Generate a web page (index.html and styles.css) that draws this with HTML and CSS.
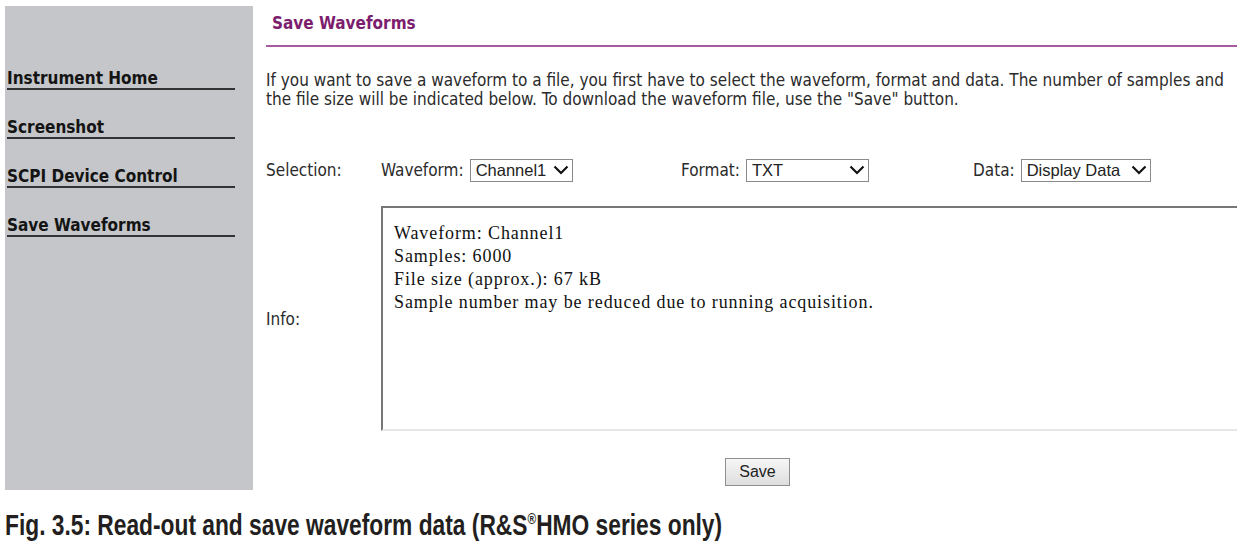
FILE: index.html
```html
<!DOCTYPE html>
<html>
<head>
<meta charset="utf-8">
<link rel="stylesheet" href="styles.css">
</head>
<body>
<div class="page">
  <aside class="sidebar">
    <nav class="nav">
      <a class="nav-item">Instrument Home</a>
      <a class="nav-item">Screenshot</a>
      <a class="nav-item">SCPI Device Control</a>
      <a class="nav-item">Save Waveforms</a>
    </nav>
  </aside>
  <main class="main">
    <h1 class="title">Save Waveforms</h1>
    <p class="intro">If you want to save a waveform to a file, you first have to select the waveform, format and data. The number of samples and the file size will be indicated below. To download the waveform file, use the "Save" button.</p>
    <div class="form">
      <div class="label">Selection:</div>
      <div class="selects">
        <div class="field f-wave">
          <span class="flabel">Waveform:</span>
          <span class="select s-wave"><span class="stext">Channel1</span><svg class="chev" viewBox="0 0 16 10" width="16" height="10"><path d="M1.5 1.5 L8 8 L14.5 1.5" fill="none" stroke="#111" stroke-width="2.2"/></svg></span>
        </div>
        <div class="field f-format">
          <span class="flabel">Format:</span>
          <span class="select s-format"><span class="stext">TXT</span><svg class="chev" viewBox="0 0 16 10" width="16" height="10"><path d="M1.5 1.5 L8 8 L14.5 1.5" fill="none" stroke="#111" stroke-width="2.2"/></svg></span>
        </div>
        <div class="field f-data">
          <span class="flabel">Data:</span>
          <span class="select s-data"><span class="stext">Display Data</span><svg class="chev" viewBox="0 0 16 10" width="16" height="10"><path d="M1.5 1.5 L8 8 L14.5 1.5" fill="none" stroke="#111" stroke-width="2.2"/></svg></span>
        </div>
      </div>
      <div class="label info-label">Info:</div>
      <div class="infobox">
        <div>Waveform: Channel1</div>
        <div>Samples: 6000</div>
        <div>File size (approx.): 67 kB</div>
        <div>Sample number may be reduced due to running acquisition.</div>
      </div>
    </div>
    <div class="actions"><button class="btn">Save</button></div>
  </main>
</div>
<p class="caption">Fig. 3.5: Read-out and save waveform data (R&amp;S<sup class="reg">®</sup>HMO series only)</p>
</body>
</html>
```
FILE: styles.css
```css
html, body {
  margin: 0;
  padding: 0;
  background: #fff;
}
body {
  width: 1247px;
  height: 553px;
  overflow: hidden;
  font-family: "DejaVu Sans Condensed", "DejaVu Sans", Verdana, sans-serif;
  font-stretch: condensed;
  color: #2b2b2b;
}
.page {
  display: flex;
  padding: 6px 0 0 5px;
}
.sidebar {
  width: 248px;
  height: 484px;
  background: #c4c6c9;
  flex: none;
}
.nav {
  display: flex;
  flex-direction: column;
  padding: 62px 0 0 2px;
  gap: 27px;
}
.nav-item {
  display: block;
  width: 228px;
  font-weight: bold;
  font-size: 17px;
  line-height: 20px;
  color: #141414;
  border-bottom: 2px solid #333;
}
.main {
  margin-left: 13px;
  width: 971px;
  display: flex;
  flex-direction: column;
}
.title {
  margin: 0;
  padding: 7px 0 0 6px;
  height: 32px;
  font-size: 17px;
  line-height: 20px;
  font-weight: bold;
  color: #7c1d6e;
  border-bottom: 2px solid #a65c9e;
}
.intro {
  margin: 24px 0 0 0;
  font-size: 17px;
  line-height: 19px;
  color: #2b2b2b;
}
.form {
  display: grid;
  grid-template-columns: 115px 1fr;
  grid-template-rows: 24px 225px;
  row-gap: 24px;
  margin-top: 49px;
  align-items: center;
}
.label {
  font-size: 17px;
  color: #2b2b2b;
}
.selects {
  display: flex;
  align-items: center;
}
.field {
  display: flex;
  align-items: center;
  gap: 6px;
  font-size: 17px;
}
.f-wave { width: 300px; }
.f-format { width: 292px; }
.select {
  display: flex;
  align-items: center;
  justify-content: space-between;
  height: 23px;
  box-sizing: border-box;
  border: 1px solid #8a8a8a;
  padding: 0 3px 0 5px;
  font-family: "Liberation Sans", Arial, sans-serif;
  font-stretch: normal;
  font-size: 16.5px;
  color: #222;
  background: #fff;
}
.s-wave { width: 103px; }
.s-format { width: 123px; }
.s-data { width: 130px; }
.chev { flex: none; }
.infobox {
  height: 225px;
  box-sizing: border-box;
  border-style: solid;
  border-width: 2px 0 2px 2px;
  border-color: #777 #e6e6e6 #e6e6e6 #777;
  padding: 14px 0 0 11px;
  font-family: "Liberation Serif", "Times New Roman", serif;
  font-stretch: normal;
  font-size: 18px;
  letter-spacing: 0.9px;
  line-height: 23px;
  color: #111;
}
.actions {
  display: flex;
  justify-content: flex-start;
  padding: 27px 0 0 459px;
}
.btn {
  width: 65px;
  height: 28px;
  border: 1px solid #8f8f8f;
  background: linear-gradient(#f6f6f6, #dedede);
  font-family: "Liberation Sans", Arial, sans-serif;
  font-size: 16px;
  color: #222;
  padding: 0;
}
.caption {
  margin: 18px 0 0 5px;
  font-family: "Liberation Sans", Arial, sans-serif;
  font-stretch: normal;
  font-weight: bold;
  font-size: 29px;
  line-height: 34px;
  color: #231f20;
  transform: scaleX(0.785);
  transform-origin: left center;
  white-space: nowrap;
}
.reg {
  font-size: 15px;
  vertical-align: 11px;
  line-height: 0;
}
```
